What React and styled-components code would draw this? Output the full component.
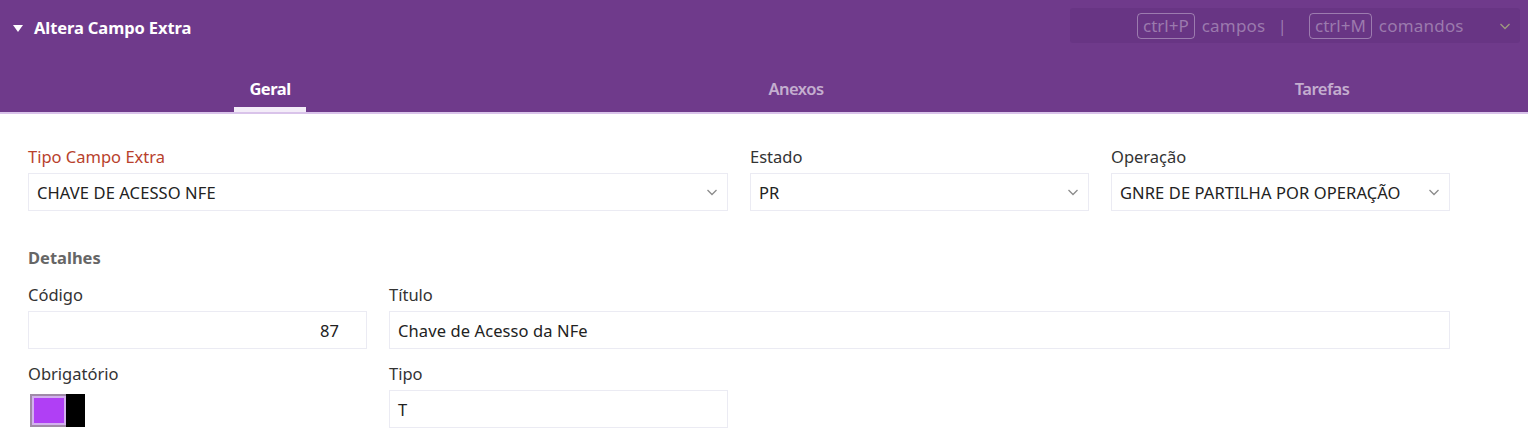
import React from "react";
import styled, { createGlobalStyle } from "styled-components";

const Global = createGlobalStyle`
  html, body { margin: 0; padding: 0; background: #ffffff; }
  body { font-family: "Noto Sans", "Open Sans", sans-serif; overflow: hidden; }
  * { box-sizing: border-box; }
`;

const Page = styled.div`
  width: 1528px;
  height: 440px;
  overflow: hidden;
  background: #fff;
`;

const Header = styled.header`
  background: #6f3a8b;
  border-bottom: 2px solid #d9c3ea;
  height: 114px;
  overflow: hidden;
`;

const TopBar = styled.div`
  display: flex;
  align-items: flex-start;
  justify-content: space-between;
  padding: 8px 8px 0 13px;
  height: 62px;
`;

const Title = styled.div`
  display: flex;
  align-items: center;
  gap: 11px;
  margin-top: 8px;
  color: #fff;
  font-weight: 700;
  font-size: 16.5px;
  letter-spacing: -0.1px;
`;

const Triangle = styled.span`
  width: 0;
  height: 0;
  border-left: 5px solid transparent;
  border-right: 5px solid transparent;
  border-top: 7px solid #fff;
  margin-top: 1px;
`;

const Shortcuts = styled.div`
  width: 450px;
  height: 35px;
  background: #683584;
  border-radius: 3px;
  display: flex;
  align-items: center;
  padding-left: 67px;
  color: rgba(255, 255, 255, 0.35);
  font-size: 17px;
  letter-spacing: 0.2px;
`;

const Key = styled.span`
  border: 1px solid rgba(255, 255, 255, 0.35);
  border-radius: 4px;
  padding: 0 5px;
  height: 26px;
  line-height: 24px;
  margin-right: 7px;
  letter-spacing: 0;
`;

const Sep = styled.span`
  margin: 0 22px 0 12px;
`;

const Chevron = styled.span`
  margin-left: auto;
  margin-right: 8px;
  display: flex;
  color: #9e9a7e;
`;

const Tabs = styled.nav`
  display: grid;
  grid-template-columns: repeat(3, 526px);
  margin-left: 7px;
  height: 50px;
`;

const Tab = styled.div`
  display: flex;
  flex-direction: column;
  align-items: center;
  justify-content: flex-end;
`;

const TabLabel = styled.span`
  font-size: 16.5px;
  font-weight: ${(p) => (p.$active ? 700 : 600)};
  color: ${(p) => (p.$active ? "#ffffff" : "rgba(255,255,255,0.6)")};
  letter-spacing: -0.5px;
  padding: 0 12px;
  line-height: 22px;
  margin-bottom: 7px;
`;

const Underline = styled.span`
  width: 72px;
  height: 5px;
  background: ${(p) => (p.$active ? "#f3ecf8" : "transparent")};
`;

const Form = styled.main`
  padding: 32px 0 0 28px;
  width: 1450px;
`;

const Grid = styled.div`
  display: grid;
  grid-template-columns: repeat(4, 339px);
  column-gap: 22px;
  row-gap: ${(p) => p.$rowGap || 0}px;
`;

const Field = styled.div`
  grid-column: span ${(p) => p.$span || 1};
  display: flex;
  flex-direction: column;
`;

const Label = styled.label`
  font-size: 16.5px;
  line-height: 22px;
  color: ${(p) => (p.$required ? "#b8412c" : "#333")};
  margin-bottom: 5px;
`;

const Box = styled.div`
  height: 38px;
  border: 1px solid #ebebf3;
  display: flex;
  align-items: center;
  justify-content: ${(p) => (p.$right ? "flex-end" : "space-between")};
  padding: 0 ${(p) => (p.$right ? "27px" : "8px")} 0 8px;
  font-size: 16.5px;
  letter-spacing: 0.1px;
  color: #222;
`;

const Caret = styled.span`
  display: flex;
  color: #8c8c8c;
`;

const Section = styled.h3`
  margin: 36px 0 15px 0;
  font-size: 16.5px;
  font-weight: 700;
  color: #666;
  line-height: 22px;
`;

const Toggle = styled.div`
  margin-top: 4px;
  margin-left: 2px;
  width: 55px;
  height: 33px;
  display: flex;
  border: 2px solid #a08aa8;
`;

const ToggleTrack = styled.div`
  flex: 1;
  border: 2px solid #d3b0ef;
  background: #b03ff5;
`;

const ToggleKnob = styled.div`
  width: 19px;
  background: #000;
  margin: -2px -2px -2px 0;
`;

const ChevronDown = ({ size = 14 }) => (
  <svg width={size} height={size} viewBox="0 0 14 14" fill="none">
    <path d="M2.5 5l4.5 4.5L11.5 5" stroke="currentColor" strokeWidth="1.3" />
  </svg>
);

const Select = ({ value }) => (
  <Box>
    <span>{value}</span>
    <Caret>
      <ChevronDown />
    </Caret>
  </Box>
);

export default function App() {
  return (
    <Page>
      <Global />
      <Header>
        <TopBar>
          <Title>
            <Triangle />
            Altera Campo Extra
          </Title>
          <Shortcuts>
            <Key>ctrl+P</Key>
            campos
            <Sep>|</Sep>
            <Key>ctrl+M</Key>
            comandos
            <Chevron>
              <ChevronDown size={14} />
            </Chevron>
          </Shortcuts>
        </TopBar>
        <Tabs>
          <Tab>
            <TabLabel $active>Geral</TabLabel>
            <Underline $active />
          </Tab>
          <Tab>
            <TabLabel>Anexos</TabLabel>
            <Underline />
          </Tab>
          <Tab>
            <TabLabel>Tarefas</TabLabel>
            <Underline />
          </Tab>
        </Tabs>
      </Header>
      <Form>
        <Grid>
          <Field $span={2}>
            <Label $required>Tipo Campo Extra</Label>
            <Select value="CHAVE DE ACESSO NFE" />
          </Field>
          <Field>
            <Label>Estado</Label>
            <Select value="PR" />
          </Field>
          <Field>
            <Label>Operação</Label>
            <Select value="GNRE DE PARTILHA POR OPERAÇÃO" />
          </Field>
        </Grid>
        <Section>Detalhes</Section>
        <Grid $rowGap={14}>
          <Field>
            <Label>Código</Label>
            <Box $right>87</Box>
          </Field>
          <Field $span={3}>
            <Label>Título</Label>
            <Box>Chave de Acesso da NFe</Box>
          </Field>
          <Field>
            <Label>Obrigatório</Label>
            <Toggle>
              <ToggleTrack />
              <ToggleKnob />
            </Toggle>
          </Field>
          <Field>
            <Label>Tipo</Label>
            <Box>T</Box>
          </Field>
        </Grid>
      </Form>
    </Page>
  );
}
